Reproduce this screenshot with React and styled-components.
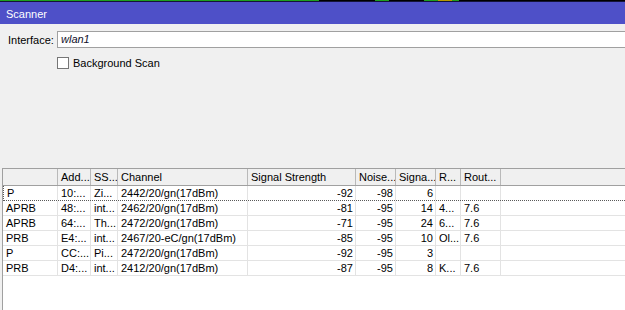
import React from 'react'
import styled, { createGlobalStyle } from 'styled-components'

const GlobalStyle = createGlobalStyle`
  html, body {
    margin: 0;
    padding: 0;
    background: #f0f0f0;
  }
  body {
    font-family: "Liberation Sans", Arial, sans-serif;
    font-size: 11px;
    color: #000;
  }
`

const Window = styled.div`
  width: 625px;
  height: 310px;
  overflow: hidden;
  display: flex;
  flex-direction: column;
  background: #f0f0f0;
`

const StatusStrip = styled.div`
  height: 1px;
  display: flex;
  background: #000;
`
const Seg = styled.div`
  height: 1px;
  width: ${p => p.$w}px;
  background: ${p => p.$c};
`
const DarkLine = styled.div`
  height: 1px;
  background: #14143a;
`

const TitleBar = styled.div`
  height: 22px;
  box-sizing: border-box;
  padding: 3px 0 0 6px;
  line-height: 19px;
  background: #4e50c8;
  color: #fff;
  font-size: 11px;
`

const Form = styled.div`
  height: 144px;
  box-sizing: border-box;
  padding-top: 7px;
`

const FieldRow = styled.div`
  display: flex;
  align-items: center;
  height: 17px;
  padding-left: 8px;
`
const Label = styled.div`
  width: 49px;
`
const TextBox = styled.div`
  flex: 1;
  height: 17px;
  box-sizing: border-box;
  border: 1px solid #a0a0a0;
  border-right: none;
  background: #fff;
  padding-left: 3px;
  line-height: 15px;
  font-style: italic;
  color: #10102a;
`

const CheckRow = styled.label`
  display: flex;
  align-items: center;
  gap: 4px;
  margin-top: 9px;
  padding-left: 57px;
  height: 12px;
`
const Box = styled.span`
  width: 12px;
  height: 12px;
  box-sizing: border-box;
  border: 1px solid #767676;
  background: #fff;
`

const Table = styled.div`
  flex: 1;
  margin-left: 2px;
  border-left: 1px solid #a0a0a0;
  background: #fff;
`

const cols = first =>
  `${first}px 33px 27px 130px 108px 40px 40px 25px 40px 1fr`

const HeaderRow = styled.div`
  display: grid;
  grid-template-columns: ${cols(55)};
  height: 18px;
  box-sizing: border-box;
  border-top: 1px solid #a0a0a0;
  border-bottom: 1px solid #a0a0a0;
  background: #f0f0f0;
  line-height: 16px;
`
const HeadCell = styled.div`
  border-right: 1px solid #b9b9b9;
  padding: 0 2px 0 3px;
  white-space: nowrap;
  overflow: hidden;
  &:last-child { border-right: none; }
`

const Row = styled.div`
  display: grid;
  grid-template-columns: ${p => cols(p.$focus ? 54 : 55)};
  height: 15px;
  box-sizing: border-box;
  border-bottom: 1px ${p => (p.$focus ? 'dotted #5a5a5a' : 'solid #e3e3e3')};
  border-left: ${p => (p.$focus ? '1px dotted #5a5a5a' : 'none')};
  line-height: 14px;
`
const Cell = styled.div`
  border-right: 1px solid #e3e3e3;
  padding: ${p => (p.$num ? '0 2px 0 0' : '0 2px 0 3px')};
  text-align: ${p => (p.$num ? 'right' : 'left')};
  white-space: nowrap;
  overflow: hidden;
  &:last-child { border-right: none; }
`

const headers = ['', 'Add...', 'SS...', 'Channel', 'Signal Strength', 'Noise...', 'Signa...', 'R...', 'Rout...', '']

const rows = [
  ['P', '10:...', 'Zi...', '2442/20/gn(17dBm)', '-92', '-98', '6', '', ''],
  ['APRB', '48:...', 'int...', '2462/20/gn(17dBm)', '-81', '-95', '14', '4...', '7.6'],
  ['APRB', '64:...', 'Th...', '2472/20/gn(17dBm)', '-71', '-95', '24', '6...', '7.6'],
  ['PRB', 'E4:...', 'int...', '2467/20-eC/gn(17dBm)', '-85', '-95', '10', 'Ol...', '7.6'],
  ['P', 'CC:...', 'Pi...', '2472/20/gn(17dBm)', '-92', '-95', '3', '', ''],
  ['PRB', 'D4:...', 'int...', '2412/20/gn(17dBm)', '-87', '-95', '8', 'K...', '7.6'],
]

const numCols = [4, 5, 6]

const strip = [
  [319, '#1ea01e'], [56, '#000'], [14, '#1ea01e'], [35, '#000'],
  [14, '#1ea01e'], [14, '#b89a00'], [7, '#1ea01e'],
]

export default function App() {
  return (
    <Window>
      <GlobalStyle />
      <StatusStrip>
        {strip.map(([w, c], i) => <Seg key={i} $w={w} $c={c} />)}
      </StatusStrip>
      <DarkLine />
      <TitleBar>Scanner</TitleBar>
      <Form>
        <FieldRow>
          <Label>Interface:</Label>
          <TextBox>wlan1</TextBox>
        </FieldRow>
        <CheckRow>
          <Box />
          Background Scan
        </CheckRow>
      </Form>
      <Table>
        <HeaderRow>
          {headers.map((h, i) => <HeadCell key={i}>{h}</HeadCell>)}
        </HeaderRow>
        {rows.map((r, i) => (
          <Row key={i} $focus={i === 0}>
            {r.map((v, j) => <Cell key={j} $num={numCols.includes(j)}>{v}</Cell>)}
            <Cell />
          </Row>
        ))}
      </Table>
    </Window>
  )
}
